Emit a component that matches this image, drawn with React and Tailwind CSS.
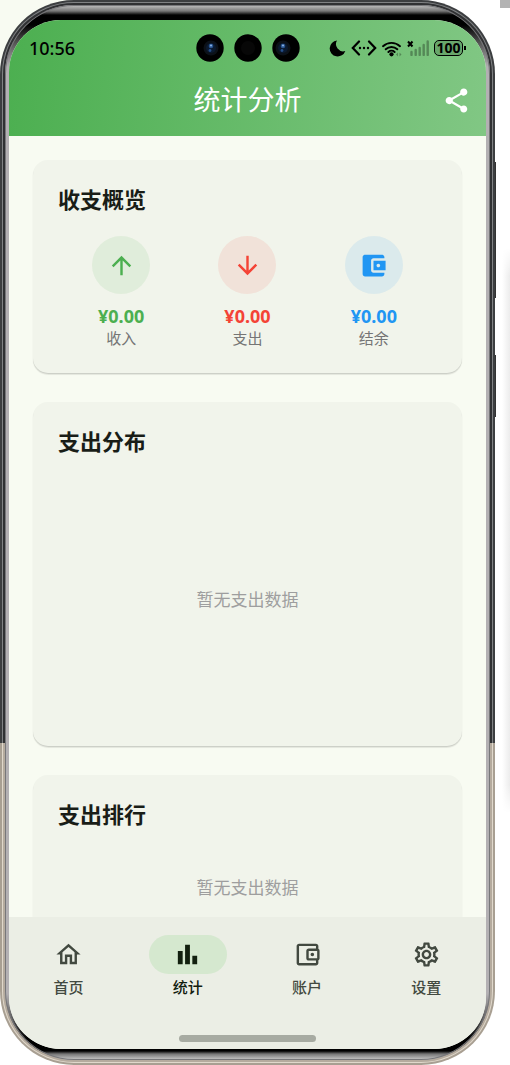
import React from "react";

const ICONS = {
  up: "M4 12l1.41 1.41L11 7.83V20h2V7.83l5.58 5.59L20 12l-8-8-8 8z",
  down: "M20 12l-1.41-1.41L13 16.17V4h-2v12.17l-5.58-5.59L4 12l8 8 8-8z",
  wallet:
    "M21 18v1c0 1.1-.9 2-2 2H5c-1.11 0-2-.9-2-2V5c0-1.1.89-2 2-2h14c1.1 0 2 .9 2 2v1h-9c-1.11 0-2 .9-2 2v8c0 1.1.89 2 2 2h9zm-9-2h10V8H12v8zm4-2.5c-.83 0-1.5-.67-1.5-1.5s.67-1.5 1.5-1.5 1.5.67 1.5 1.5-.67 1.5-1.5 1.5z",
  walletOutline:
    "M21 7.28V5c0-1.1-.9-2-2-2H5c-1.11 0-2 .9-2 2v14c0 1.1.89 2 2 2h14c1.1 0 2-.9 2-2v-2.28c.59-.35 1-.98 1-1.72V9c0-.74-.41-1.37-1-1.72zM20 9v6h-7V9h7zM5 19V5h14v2h-6c-1.1 0-2 .9-2 2v6c0 1.1.9 2 2 2h6v2H5z M16 10.5a1.5 1.5 0 1 0 0 3a1.5 1.5 0 1 0 0-3z",
  home: "M12 5.69l5 4.5V18h-2v-6H9v6H7v-7.81l5-4.5M12 3L2 12h3v8h6v-6h2v6h6v-8h3L12 3z",
  chart: "M4 9h4v11H4zm12 4h4v7h-4zm-6-9h4v16h-4z",
  settings:
    "M19.43 12.98c.04-.32.07-.64.07-.98 0-.34-.03-.66-.07-.98l2.11-1.65c.19-.15.24-.42.12-.64l-2-3.46c-.09-.16-.26-.25-.44-.25-.06 0-.12.01-.17.03l-2.49 1c-.52-.4-1.08-.73-1.69-.98l-.38-2.65C14.46 2.18 14.25 2 14 2h-4c-.25 0-.46.18-.49.42l-.38 2.65c-.61.25-1.17.59-1.69.98l-2.49-1c-.06-.02-.12-.03-.18-.03-.17 0-.34.09-.43.25l-2 3.46c-.13.22-.07.49.12.64l2.11 1.65c-.04.32-.07.65-.07.98 0 .33.03.66.07.98l-2.11 1.65c-.19.15-.24.42-.12.64l2 3.46c.09.16.26.25.44.25.06 0 .12-.01.17-.03l2.49-1c.52.4 1.08.73 1.69.98l.38 2.65c.03.24.24.42.49.42h4c.25 0 .46-.18.49-.42l.38-2.65c.61-.25 1.17-.59 1.69-.98l2.49 1c.06.02.12.03.18.03.17 0 .34-.09.43-.25l2-3.46c.12-.22.07-.49-.12-.64l-2.11-1.65zm-1.98-1.71c.04.31.05.52.05.73 0 .21-.02.43-.05.73l-.14 1.13.89.7 1.08.84-.7 1.21-1.27-.51-1.04-.42-.9.68c-.43.32-.84.56-1.25.73l-1.06.43-.16 1.13-.2 1.35h-1.4l-.19-1.35-.16-1.13-1.06-.43c-.43-.18-.83-.41-1.23-.71l-.91-.7-1.06.43-1.27.51-.7-1.21 1.08-.84.89-.7-.14-1.13c-.03-.31-.05-.54-.05-.74s.02-.43.05-.73l.14-1.13-.89-.7-1.08-.84.7-1.21 1.27.51 1.04.42.9-.68c.43-.32.84-.56 1.25-.73l1.06-.43.16-1.13.2-1.35h1.39l.19 1.35.16 1.13 1.06.43c.43.18.83.41 1.23.71l.91.7 1.06-.43 1.27-.51.7 1.21-1.07.85-.89.7.14 1.13zM12 8c-2.21 0-4 1.79-4 4s1.79 4 4 4 4-1.79 4-4-1.79-4-4-4zm0 6c-1.1 0-2-.9-2-2s.9-2 2-2 2 .9 2 2-.9 2-2 2z",
  share:
    "M18 16.08c-.76 0-1.44.3-1.96.77L8.91 12.7c.05-.23.09-.46.09-.7s-.04-.47-.09-.7l7.05-4.11c.54.5 1.25.81 2.04.81 1.66 0 3-1.34 3-3s-1.34-3-3-3-3 1.34-3 3c0 .24.04.47.09.7L8.04 9.81C7.5 9.31 6.79 9 6 9c-1.66 0-3 1.34-3 3s1.34 3 3 3c.79 0 1.5-.31 2.04-.81l7.12 4.16c-.05.21-.08.43-.08.65 0 1.61 1.31 2.92 2.92 2.92 1.61 0 2.92-1.31 2.92-2.92s-1.31-2.92-2.92-2.92z",
};

function Icon({ name }) {
  return (
    <svg viewBox="0 0 24 24" className="size-[29px] fill-current" aria-hidden="true">
      <path d={ICONS[name]} />
    </svg>
  );
}

function Camera({ glint }) {
  return (
    <svg viewBox="0 0 28 28" className="size-7" aria-hidden="true">
      <circle cx="14" cy="14" r="13.7" fill="#000" />
      {glint ? (
        <g>
          <circle cx={glint} cy="14" r="7.5" fill="#0c1118" />
          <circle cx={glint} cy="14" r="5" fill="#0b1a30" />
          <circle cx={glint} cy="12" r="2.3" fill="#2a5590" />
          <circle cx={glint} cy="11.6" r="1" fill="#8fb8ea" />
          <circle cx={glint - 1} cy="16.5" r="1.4" fill="#254f8a" />
        </g>
      ) : (
        <circle cx="14" cy="14" r="7" fill="#070707" />
      )}
    </svg>
  );
}

function StatusBar() {
  return (
    <div className="grid h-14 grid-cols-[1fr_auto_1fr] items-center px-5 text-black">
      <span className="text-[18px] leading-6 font-medium">10:56</span>
      <div className="flex gap-[10px]">
        <Camera glint={15} />
        <Camera />
        <Camera glint={11} />
      </div>
      <div className="flex items-center justify-end gap-[5px]">
        <svg viewBox="0 0 17 17" className="size-[17px]" aria-hidden="true">
          <path d="M8 .5A8 8 0 1 0 16.3 11 7.2 7.2 0 0 1 8 .5z" />
        </svg>
        <svg viewBox="0 0 26 16" className="h-4 w-[26px]" aria-hidden="true">
          <path d="M8 1.5 1.8 8 8 14.5M18 1.5 24.2 8 18 14.5" fill="none" stroke="#000" strokeWidth="2.2" strokeLinecap="round" />
          <circle cx="9" cy="8" r="1.2" />
          <circle cx="13" cy="8" r="1.2" />
          <circle cx="17" cy="8" r="1.2" />
        </svg>
        <svg viewBox="0 0 20 17" className="h-[17px] w-5" aria-hidden="true">
          <path d="M1 6.2a12.5 12.5 0 0 1 17 0M3.7 9.3a8.5 8.5 0 0 1 11.6 0M6.4 12a4.6 4.6 0 0 1 6.2 0" fill="none" stroke="#000" strokeWidth="1.9" strokeLinecap="round" />
          <circle cx="9.5" cy="14.3" r="2.1" />
          <path d="M14 14.5l2-2v4zM19.5 14.5l-2-2v4z" opacity=".3" />
        </svg>
        <svg viewBox="0 0 22 16" className="h-4 w-[22px]" aria-hidden="true">
          <path d="M1 1.5 5.5 6.5M5.5 1.5 1 6.5" stroke="#000" strokeWidth="2" />
          <path d="M4.5 15v-3M8.7 15v-5M12.7 15V8M16.7 15V5M20.7 15V1.5" stroke="#000" strokeWidth="2.4" opacity=".3" strokeLinecap="round" />
        </svg>
        <div className="flex items-center gap-px">
          <span className="flex h-4 w-[29px] items-center justify-center rounded-[5px] border border-black bg-black/15 text-[14px] leading-none font-bold">
            100
          </span>
          <span className="h-1 w-[2px] bg-black" />
        </div>
      </div>
    </div>
  );
}

function Card({ title, children }) {
  return (
    <section className="shrink-0 rounded-[15px] bg-[#f1f4eb] p-[25px] shadow-[0_1px_1px_rgba(0,0,0,0.12),0_2px_1px_rgba(0,0,0,0.07)]">
      <h2 className="text-[22px] leading-7 font-bold text-[#191d17]">{title}</h2>
      {children}
    </section>
  );
}

const totals = [
  { label: "收入", icon: "up", color: "text-[#4caf50]", disc: "bg-[#4caf50]/10" },
  { label: "支出", icon: "down", color: "text-[#f44336]", disc: "bg-[#f44336]/10" },
  { label: "结余", icon: "wallet", color: "text-[#2196f3]", disc: "bg-[#2196f3]/10" },
];

const tabs = [
  { label: "首页", icon: "home" },
  { label: "统计", icon: "chart", active: true },
  { label: "账户", icon: "walletOutline" },
  { label: "设置", icon: "settings" },
];

function Screen() {
  return (
    <div className="flex h-full flex-col overflow-hidden rounded-[52px] bg-[#f8fbf2]">
      <header className="bg-[linear-gradient(95deg,#4caf50,#81c784)] pb-3">
        <StatusBar />
        <div className="grid h-12 grid-cols-[1fr_auto_1fr] items-center px-[15px] text-white">
          <h1 className="col-start-2 text-[27px] leading-8">统计分析</h1>
          <button type="button" aria-label="分享" className="justify-self-end">
            <Icon name="share" />
          </button>
        </div>
      </header>

      <main className="flex min-h-0 flex-1 flex-col gap-[29px] overflow-hidden px-6 pt-6">
        <Card title="收支概览">
          <div className="mt-[23px] grid grid-cols-3">
            {totals.map((t) => (
              <div key={t.label} className={`flex flex-col items-center ${t.color}`}>
                <div className={`flex size-[58px] items-center justify-center rounded-full ${t.disc}`}>
                  <Icon name={t.icon} />
                </div>
                <div className="mt-[10px] text-[18px] leading-6 font-bold">¥0.00</div>
                <div className="text-[15px] leading-5 text-[#757575]">{t.label}</div>
              </div>
            ))}
          </div>
        </Card>
        <Card title="支出分布">
          <p className="mt-6 flex h-[242px] items-center justify-center text-[17px] text-[#9e9e9e]">暂无支出数据</p>
        </Card>
        <Card title="支出排行">
          <p className="mt-6 flex h-[72px] items-center justify-center text-[17px] text-[#9e9e9e]">暂无支出数据</p>
        </Card>
      </main>

      <nav className="flex h-[132px] shrink-0 flex-col items-center bg-[#ebeee5] pt-[18px] pb-[7px]">
        <div className="grid w-full grid-cols-4">
          {tabs.map((t) => (
            <button
              key={t.label}
              type="button"
              className={`flex flex-col items-center gap-[3px] ${t.active ? "text-[#12200f]" : "text-[#424940]"}`}
            >
              <span
                className={`flex h-[39px] w-[78px] items-center justify-center rounded-full ${t.active ? "bg-[#d5e8cf]" : ""}`}
              >
                <Icon name={t.icon} />
              </span>
              <span className="text-[15px] leading-5 font-medium">{t.label}</span>
            </button>
          ))}
        </div>
        <div className="mt-auto h-[7px] w-[137px] rounded-full bg-[#a7aba2]" />
      </nav>
    </div>
  );
}

export default function App() {
  return (
    <div className="flex h-screen bg-[linear-gradient(#f8fbf2_0,#f8fbf2_120px,#fff_120px)] font-['Noto_Sans','Noto_Sans_CJK_SC',sans-serif]">
      <div className="relative min-w-0 flex-1 bg-[linear-gradient(90deg,transparent_50%,#fff_50%)]">
        <div className="h-full rounded-[74px] bg-[linear-gradient(#3c3e40_0,#3c3e40_743px,#a89f92_743px)] p-[2px]">
          <div className="h-full rounded-[72px] bg-[linear-gradient(#808284_0,#808284_741px,#e0d8cb_741px)] p-px">
            <div className="h-full rounded-[71px] bg-[linear-gradient(#303133_0,#303133_740px,#b5ab9e_740px)] p-[2px]">
              <div className="h-full rounded-[69px] bg-[linear-gradient(#c4c4c4_0,#777_6px,#000_10px,#000_20px,#555_38px,#b3b0b3_62px,#b3b0b3_calc(100%-66px),#555_calc(100%-40px),#000_calc(100%-22px),#000_calc(100%-9px),#777_calc(100%-6px),#ccc_100%)] px-1 pt-[15px] pb-[11px] shadow-[inset_0_0_0_1px_#77777a]">
                <Screen />
              </div>
            </div>
          </div>
        </div>
        <span className="absolute top-[162px] -right-px h-[136px] w-px bg-[#333]" />
        <span className="absolute top-[355px] -right-px h-[62px] w-px bg-[#333]" />
      </div>
      <div className="flex w-[15px] shrink-0 flex-col items-end bg-white">
        <div className="h-2 w-[10px] bg-[#b3b3b3]" />
        <div className="mt-[240px] h-[565px] w-2 bg-linear-to-r from-white to-[#ececec] mask-y-from-95%" />
      </div>
    </div>
  );
}
